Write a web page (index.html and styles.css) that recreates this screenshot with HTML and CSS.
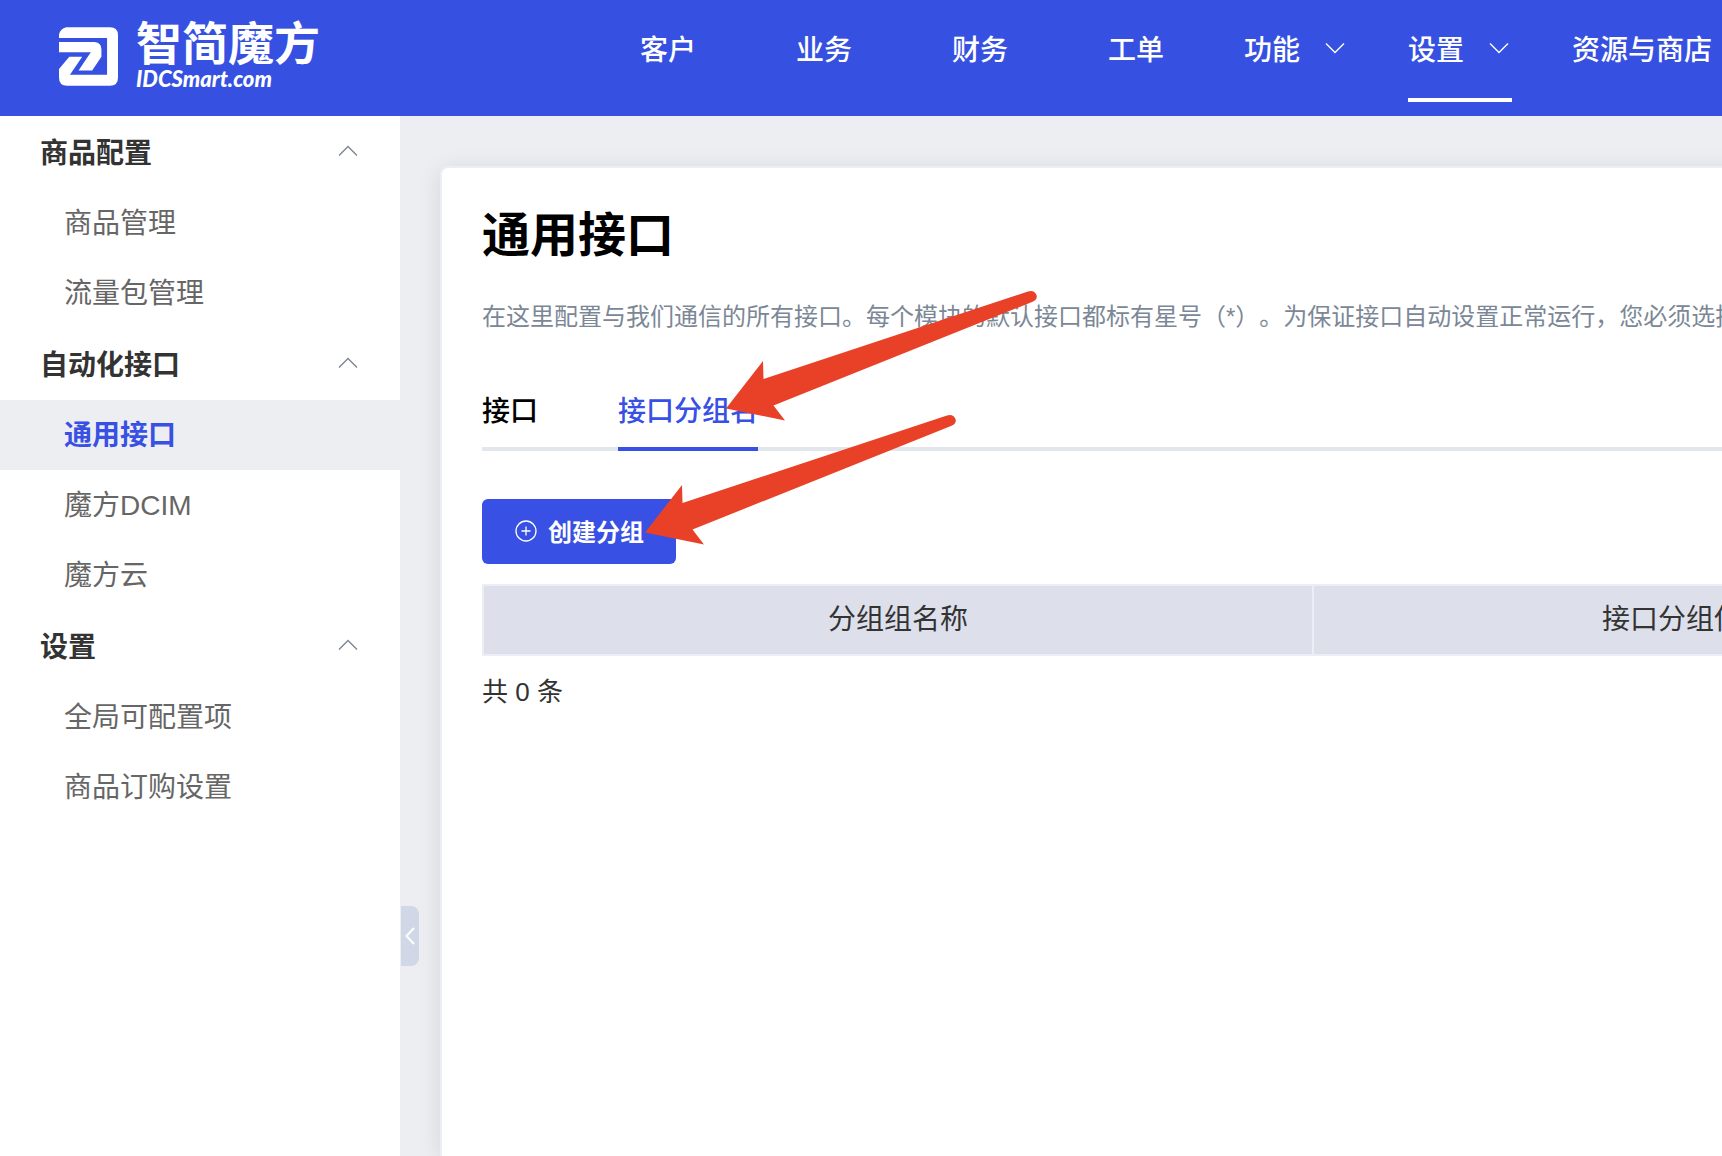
FILE: index.html
```html
<!DOCTYPE html>
<html lang="zh-CN">
<head>
<meta charset="utf-8">
<title>通用接口</title>
<link rel="stylesheet" href="styles.css">
</head>
<body>
<svg class="sprite" aria-hidden="true">
  <symbol id="chevron" viewBox="0 0 20 12"><path d="M1 1.5 10 10.5 19 1.5" fill="none" stroke="currentColor" stroke-width="1.4"/></symbol>
</svg>
<header class="header">
  <a class="logo" href="#">
    <svg class="logo-mark" viewBox="0 0 178 176" aria-hidden="true">
      <path fill="#fff" d="M22 0H154Q178 0 178 24V152Q178 176 154 176H24Q0 176 0 152V126L31 89H70L33 143H145V32H0V22Q4 4 22 0Z"/>
      <path fill="#fff" d="M0 44H108Q128 46 128 66V89L100 130H59L96 75H0Z"/>
    </svg>
    <span class="logo-text">
      <span class="logo-name">智简魔方</span>
      <span class="logo-domain">IDCSmart.com</span>
    </span>
  </a>
  <nav class="nav">
    <a class="nav-link" href="#">客户</a>
    <a class="nav-link" href="#">业务</a>
    <a class="nav-link" href="#">财务</a>
    <a class="nav-link" href="#">工单</a>
    <a class="nav-link nav-more" href="#">功能<svg class="nav-chevron"><use href="#chevron"/></svg></a>
    <a class="nav-link nav-more active" href="#">设置<svg class="nav-chevron"><use href="#chevron"/></svg></a>
    <a class="nav-link" href="#">资源与商店</a>
  </nav>
</header>
<div class="layout">
  <aside class="sidebar">
    <button class="group" type="button">商品配置<svg class="group-chevron"><use href="#chevron"/></svg></button>
    <a class="item" href="#">商品管理</a>
    <a class="item" href="#">流量包管理</a>
    <button class="group" type="button">自动化接口<svg class="group-chevron"><use href="#chevron"/></svg></button>
    <a class="item current" href="#">通用接口</a>
    <a class="item" href="#">魔方DCIM</a>
    <a class="item" href="#">魔方云</a>
    <button class="group" type="button">设置<svg class="group-chevron"><use href="#chevron"/></svg></button>
    <a class="item" href="#">全局可配置项</a>
    <a class="item" href="#">商品订购设置</a>
    <button class="collapse" type="button" aria-label="收起菜单">
      <svg width="10" height="18" viewBox="0 0 10 18"><path d="M9 1 1.5 9 9 17" fill="none" stroke="#fff" stroke-width="2"/></svg>
    </button>
  </aside>
  <main class="main">
    <section class="card">
      <h1 class="title">通用接口</h1>
      <p class="desc">在这里配置与我们通信的所有接口。每个模块的默认接口都标有星号（*）。为保证接口自动设置正常运行，您必须选择</p>
      <div class="tabs">
        <a class="tab" href="#">接口</a>
        <a class="tab selected" href="#">接口分组名</a>
      </div>
      <button class="create" type="button">
        <svg width="24" height="24" viewBox="0 0 24 24" fill="none" stroke="#fff" stroke-width="1.3"><circle cx="12" cy="12" r="10"/><path d="M12 7.5V16.5M7.5 12H16.5"/></svg>
        创建分组
      </button>
      <table class="table">
        <thead><tr><th>分组组名称</th><th>接口分组使用的类型</th></tr></thead>
      </table>
      <p class="total">共 0 条</p>
    </section>
  </main>
</div>
<svg class="arrows" width="400" height="270" viewBox="640 285 400 270" aria-hidden="true">
  <defs><path id="arrow" d="M726 408.5 763 361 763.500 379 1028 291.500Q1034 289.500 1036.500 295Q1038 299.500 1032 302L773.500 405.500 785 420.500Z"/></defs>
  <use href="#arrow" fill="#e94127"/>
  <use href="#arrow" fill="#e94127" x="-81" y="124"/>
</svg>
</body>
</html>
```
FILE: styles.css
```css
* { box-sizing: border-box; }
body {
  margin: 0;
  min-height: 100vh;
  display: flex;
  flex-direction: column;
  overflow: hidden;
  position: relative;
  font-family: "Liberation Sans", "Noto Sans CJK SC", sans-serif;
  font-size: 28px;
  color: #333;
  background: #edeef2;
}
a { color: inherit; text-decoration: none; }
button { font: inherit; color: inherit; border: 0; padding: 0; cursor: pointer; }
h1, p { margin: 0; }
.sprite { position: absolute; width: 0; height: 0; }

.header {
  display: flex;
  height: 116px;
  background: #3651e1;
  color: #fff;
}
.logo {
  flex: 0 0 620px;
  display: flex;
  align-items: center;
  gap: 18px;
  padding-left: 59px;
  height: 112px;
}
.logo-mark { width: 59px; height: 59px; }
.logo-text { display: flex; flex-direction: column; }
.logo-name { font-size: 46px; font-weight: 700; line-height: 46px; }
.logo-domain { font-family: Lato, sans-serif; font-size: 22px; font-weight: 900; font-style: italic; line-height: 24px; }
.nav { display: flex; gap: 60px; font-weight: 500; }
.nav-link {
  flex: none;
  min-width: 96px;
  height: 102px;
  display: flex;
  align-items: center;
  justify-content: center;
  padding-bottom: 2px;
  border-bottom: 4px solid transparent;
}
.nav-link.active { border-color: #fff; }
.nav-more { width: 104px; justify-content: space-between; padding-right: 3px; }
.nav-chevron { width: 20px; height: 12px; }

.layout { flex: 1; display: flex; }
.sidebar { position: relative; flex: 0 0 400px; background: #fff; }
.group {
  display: flex;
  align-items: center;
  justify-content: space-between;
  width: 100%;
  height: 72px;
  padding: 0 42px 2px 40px;
  background: none;
  font-weight: 700;
}
.group-chevron { width: 20px; height: 12px; color: #7c8796; transform: rotate(180deg); }
.item {
  display: flex;
  align-items: center;
  height: 70px;
  padding: 0 0 4px 64px;
  color: #666;
}
.item.current { background: #edeef2; color: #3850e3; font-weight: 700; }
.collapse {
  position: absolute;
  left: 401px;
  top: 790px;
  width: 18px;
  height: 60px;
  display: flex;
  align-items: center;
  justify-content: center;
  background: #d0d7e7;
  border-radius: 0 8px 8px 0;
}

.main { flex: 1; min-width: 0; display: flex; padding: 50px 0 0 40px; }
.card {
  flex: 1 0 auto;
  padding: 40px;
  background: #fff;
  border: 2px solid #ebeef5;
  border-bottom: 0;
  border-radius: 8px 0 0 0;
  box-shadow: 0 4px 24px rgba(0, 0, 0, 0.1);
}
.title { font-size: 48px; line-height: 56px; color: #000; }
.desc {
  margin-top: 37px;
  font-size: 24px;
  line-height: 32px;
  color: #7c8796;
  white-space: nowrap;
  text-spacing-trim: space-all;
}
.tabs { display: flex; gap: 80px; margin-top: 59px; box-shadow: inset 0 -4px #e4e6ed; }
.tab { line-height: 40px; padding-bottom: 15px; border-bottom: 4px solid transparent; color: #000; font-weight: 500; }
.tab.selected { color: #3850e3; border-color: #3850e3; }
.create {
  display: flex;
  align-items: center;
  gap: 10px;
  height: 65px;
  margin-top: 48px;
  padding: 0 32px 2px;
  font-size: 24px;
  font-weight: 700;
  color: #fff;
  background: #3850e3;
  border-radius: 6px;
}
.table { margin-top: 20px; border-collapse: collapse; }
.table th {
  min-width: 830px;
  height: 70px;
  padding: 0 0 6px;
  border: 2px solid #ebeef5;
  background: #dde0eb;
  font-weight: 400;
}
.total { margin-top: 16px; font-size: 26px; line-height: 40px; }

.arrows { position: absolute; left: 640px; top: 285px; }
```
